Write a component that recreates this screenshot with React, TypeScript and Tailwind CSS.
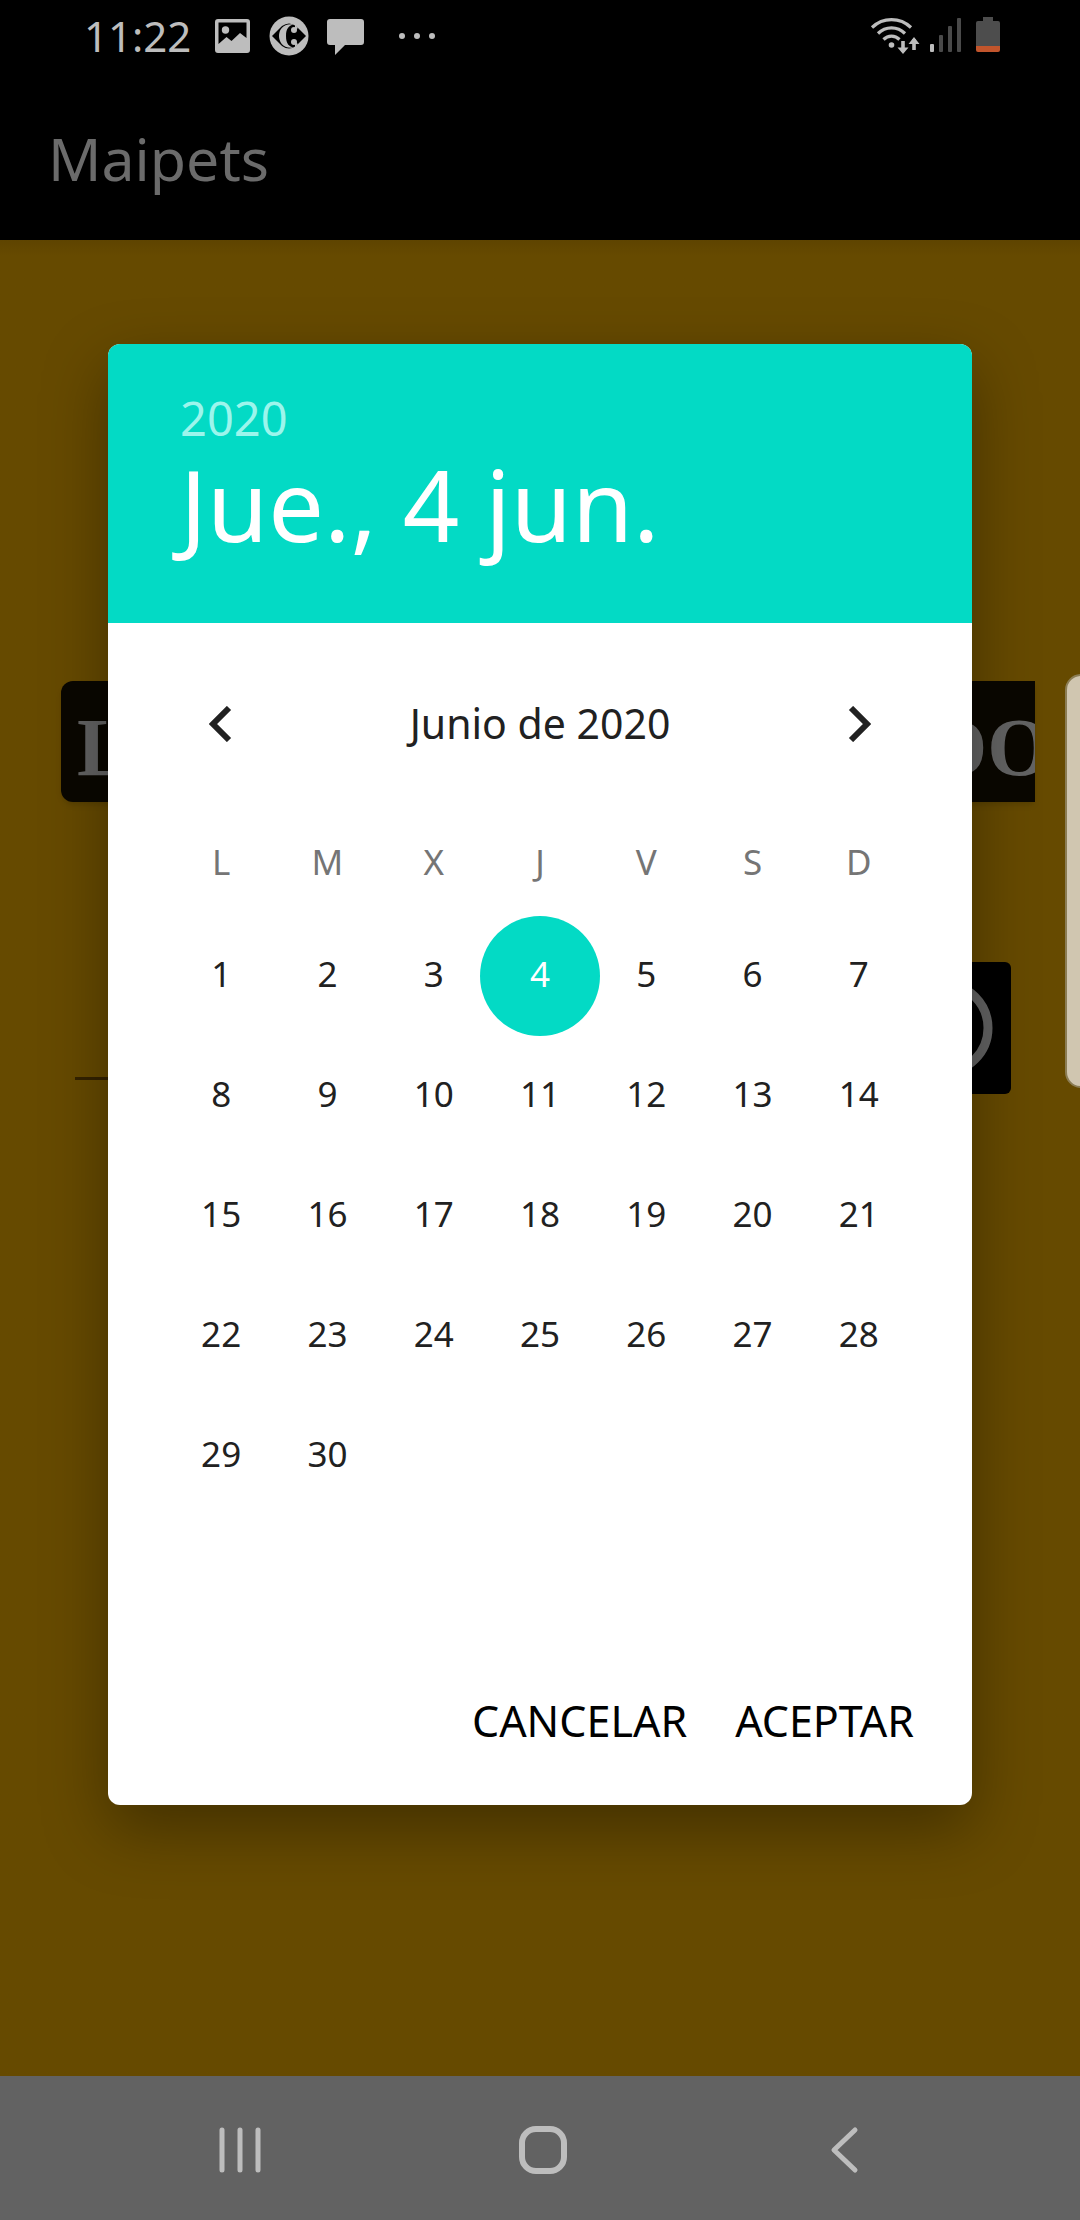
const WEEKDAYS = ["L", "M", "X", "J", "V", "S", "D"];
const WEEKS = [0, 1, 2, 3, 4, 5].map((week) =>
  WEEKDAYS.map((_, day) => week * 7 + day + 1).map((n) => (n <= 30 ? n : null)),
);
const SELECTED = 4;

function StatusBar() {
  return (
    <div className="flex h-18 items-center justify-between bg-black pr-20 pl-21 text-[#bdbdbd]">
      <div className="flex items-center">
        <span className="text-[42px] leading-none">11:22</span>
        <svg className="ml-6 h-9 w-9" viewBox="0 0 36 36" aria-hidden="true">
          <path
            fillRule="evenodd"
            fill="currentColor"
            d="M3 1h29a3 3 0 0 1 3 3v28a3 3 0 0 1-3 3H3a3 3 0 0 1-3-3V4a3 3 0 0 1 3-3zM3.500 4.500v21.500L11.500 19l5 4L25 15l6.500 5V4.500z"
          />
          <circle cx="10.500" cy="12" r="3.700" fill="currentColor" />
        </svg>
        <svg className="ml-[18px] h-10 w-10" viewBox="0 0 40 40" aria-hidden="true">
          <circle cx="20" cy="20" r="19.500" fill="currentColor" />
          <path d="M3 20L13 10Q20 5 27 10L37 20L27 30Q20 35 13 30Z" fill="black" />
          <path
            d="M25 8.500C14 7 10 14 10 20s4 13 15 11.500c-5-.5-8-4-8-11.500s3-11 8-11.500z"
            fill="currentColor"
          />
          <circle cx="25" cy="14" r="3" fill="currentColor" />
          <circle cx="25" cy="26" r="3" fill="currentColor" />
          <path d="M26 8l3 4-3 2zM26 32l3-4-3-2z" fill="currentColor" />
        </svg>
        <svg className="ml-4 h-10 w-10" viewBox="0 0 40 40" aria-hidden="true">
          <path
            fill="currentColor"
            d="M5 3h31a3 3 0 0 1 3 3v20a3 3 0 0 1-3 3H20L10 39V29H5a3 3 0 0 1-3-3V6a3 3 0 0 1 3-3z"
          />
        </svg>
        <svg className="ml-[34px] h-2 w-9" viewBox="0 0 36 8" fill="currentColor" aria-hidden="true">
          <circle cx="3" cy="4" r="3" />
          <circle cx="18" cy="4" r="3" />
          <circle cx="33" cy="4" r="3" />
        </svg>
      </div>
      <div className="flex items-center">
        <svg className="h-10 w-13" viewBox="0 0 52 40" fill="none" aria-hidden="true">
          <g stroke="currentColor" strokeWidth="3.200">
            <path d="M2 11.500C13 1 30 1 41 11.500" />
            <path d="M8 17.500C15.500 10 27.500 10 35 17.500" />
            <path d="M13.500 23.500C18 19 25 19 29.500 23.500" />
          </g>
          <circle cx="21.500" cy="29" r="2.800" fill="currentColor" />
          <g stroke="currentColor" strokeWidth="3.600" strokeLinejoin="miter">
            <path d="M33 25v11" />
            <path d="M44 34V23" />
          </g>
          <path d="M27.500 31.500h11L33 38zM38.500 28h11L44 21z" fill="currentColor" />
        </svg>
        <svg className="ml-2 h-10 w-8" viewBox="0 0 32 40" aria-hidden="true">
          <rect x="0" y="28" width="4" height="8" rx="1" fill="currentColor" />
          <g fill="#4a4a4a">
            <rect x="9" y="19" width="4" height="17" rx="1" />
            <rect x="18" y="10" width="4" height="26" rx="1" />
            <rect x="27" y="2" width="4" height="34" rx="1" />
          </g>
        </svg>
        <svg className="ml-[14px] h-10 w-6" viewBox="0 0 24 40" aria-hidden="true">
          <path d="M7 1h10v4h5a2 2 0 0 1 2 2v23H0V7a2 2 0 0 1 2-2h5z" fill="#4d4d4d" />
          <path d="M0 30h24v4a2 2 0 0 1-2 2H2a2 2 0 0 1-2-2z" fill="#c2552c" />
        </svg>
      </div>
    </div>
  );
}

function Backdrop() {
  return (
    <main className="flex-1 bg-linear-to-b from-[#5e4400] to-[#664a00] to-[16px] pt-[441px]">
      <div className="mr-[45px] ml-[61px] flex h-[121px] items-center justify-between overflow-hidden rounded-l-xl bg-[#0a0700] pt-3 pl-4 font-['Liberation_Serif',serif] text-[82px] leading-none font-bold text-[#636363] shadow-md">
        <span>L</span>
        <span className="-mr-4">DO</span>
      </div>
      <div className="mt-40 mr-[69px] ml-[75px] flex items-start justify-between">
        <input
          aria-label="Fecha"
          className="h-[118px] min-w-0 flex-1 border-b-3 border-[#332200] bg-transparent outline-none"
        />
        <button
          aria-label="Elegir fecha"
          className="flex h-[132px] w-[134px] items-center justify-center rounded-md bg-black"
        >
          <svg className="size-25" viewBox="0 0 100 100" aria-hidden="true">
            <circle cx="50" cy="50" r="44" fill="none" stroke="#636363" strokeWidth="9" />
            <path d="M50 24v26l16 12" fill="none" stroke="#636363" strokeWidth="8" />
          </svg>
        </button>
      </div>
    </main>
  );
}

function DateDialog() {
  return (
    <div
      role="dialog"
      aria-label="Elegir fecha"
      className="w-4/5 overflow-hidden rounded-xl bg-white text-[#212121] shadow-[0_24px_64px_rgba(0,0,0,0.35)]"
    >
      <header className="flex flex-col items-start bg-[#03dac5] px-[72px] pt-11 pb-[63px]">
        <button className="text-[47px] leading-[60px] text-[#9cf5ec]">2020</button>
        <button className="text-[99px] leading-[112px] text-white">Jue., 4 jun.</button>
      </header>
      <div className="px-[60px] pt-[41px]">
        <div className="mb-6 flex h-30 items-center justify-between">
          <button aria-label="Mes anterior" className="flex h-30 w-[106px] items-center justify-center">
            <svg className="h-9 w-6" viewBox="0 0 24 36" fill="none" aria-hidden="true">
              <path d="M20 2L4 18L20 34" stroke="currentColor" strokeWidth="6" />
            </svg>
          </button>
          <h2 className="text-[41px] leading-none">Junio de 2020</h2>
          <button aria-label="Mes siguiente" className="flex h-30 w-[106px] items-center justify-center">
            <svg className="h-9 w-6" viewBox="0 0 24 36" fill="none" aria-hidden="true">
              <path d="M4 2L20 18L4 34" stroke="currentColor" strokeWidth="6" />
            </svg>
          </button>
        </div>
        <table className="w-full table-fixed text-[35px] leading-none">
          <thead>
            <tr className="h-[108px] text-[#757575]">
              {WEEKDAYS.map((d) => (
                <th key={d} scope="col" className="p-0 text-center font-normal">
                  {d}
                </th>
              ))}
            </tr>
          </thead>
          <tbody>
            {WEEKS.map((week, i) => (
              <tr key={i} className="h-30">
                {week.map((n, j) => (
                  <td key={j} className="p-0">
                    {n && (
                      <div className="-mx-2 flex justify-center">
                        <button
                          aria-pressed={n === SELECTED}
                          className={
                            n === SELECTED
                              ? "size-30 rounded-full bg-[#03dac5] pb-1 text-white"
                              : "size-30 rounded-full pb-1"
                          }
                        >
                          {n}
                        </button>
                      </div>
                    )}
                  </td>
                ))}
              </tr>
            ))}
          </tbody>
        </table>
      </div>
      <footer className="flex h-[169px] items-center justify-end pr-[34px] text-[43px] leading-none text-black">
        <button className="px-6 py-4">CANCELAR</button>
        <button className="px-6 py-4">ACEPTAR</button>
      </footer>
    </div>
  );
}

function NavBar() {
  return (
    <nav className="flex h-36 items-center justify-between bg-[#626262] pt-1 pr-[170px] pl-[175px] text-[#bdbdbd]">
      <button aria-label="Recientes" className="flex h-24 w-[130px] items-center justify-center">
        <svg className="size-12" viewBox="0 0 48 48" stroke="currentColor" strokeWidth="5" strokeLinecap="round" aria-hidden="true">
          <path d="M6 4v40M24 4v40M42 4v40" />
        </svg>
      </button>
      <button aria-label="Inicio" className="flex h-24 w-[130px] items-center justify-center">
        <svg className="size-12" viewBox="0 0 48 48" fill="none" aria-hidden="true">
          <rect x="3" y="3" width="42" height="42" rx="14" stroke="currentColor" strokeWidth="6" />
        </svg>
      </button>
      <button aria-label="Atrás" className="flex h-24 w-[130px] items-center justify-center">
        <svg className="size-12" viewBox="0 0 48 48" fill="none" stroke="currentColor" strokeWidth="5" strokeLinecap="round" strokeLinejoin="round" aria-hidden="true">
          <path d="M34 4L13 24L34 44" />
        </svg>
      </button>
    </nav>
  );
}

export default function App() {
  return (
    <div className="relative flex min-h-screen flex-col overflow-hidden font-['Noto_Sans',sans-serif]">
      <StatusBar />
      <header className="flex h-42 items-center bg-black px-12 pt-1">
        <h1 className="text-[59px] leading-none text-[#6b6b6b]">Maipets</h1>
      </header>
      <Backdrop />
      <NavBar />
      <div className="absolute inset-x-0 top-18 bottom-36 flex items-center justify-center">
        <DateDialog />
      </div>
      <div className="absolute top-[674px] -right-[17px] h-[414px] w-8 rounded-2xl border-2 border-[#8b7d55] bg-[#d0c6b0]" />
    </div>
  );
}
